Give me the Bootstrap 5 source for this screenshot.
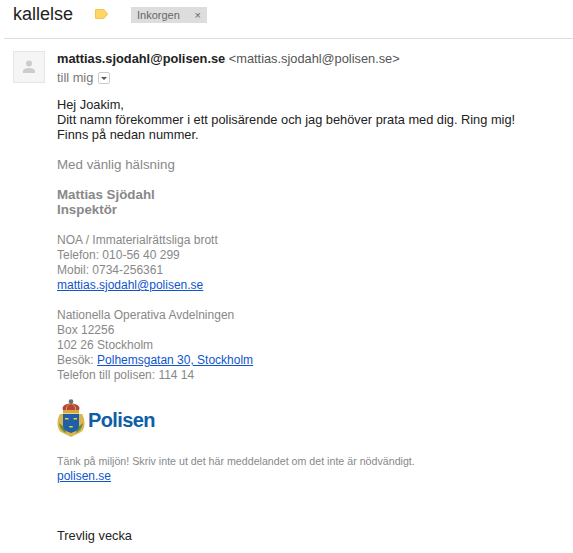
<!DOCTYPE html>
<html lang="sv">
<head>
    <meta charset="UTF-8">
    <title>kallelse</title>
    <link rel="stylesheet" href="https://cdn.jsdelivr.net/npm/bootstrap@5.3.0/dist/css/bootstrap.min.css">
    <style>
        body {
            font-family: "Liberation Sans", Arial, sans-serif;
            font-size: 12px;
            line-height: 15px;
            color: #222;
            background: #fff;
            overflow: hidden;
        }
        .mail-head {
            height: 39px;
            margin-left: 4px;
            padding: 0 0 10px 9px;
            border-bottom: 1px solid #dcdcdc;
        }
        .mail-subject {
            font-size: 18px;
            line-height: 28px;
        }
        .mail-tag {
            margin-left: 21px;
        }
        .mail-inbox {
            margin: 2px 0 0 22px;
            height: 16px;
            padding: 0 6px;
            width: 76px;
            background: #ddd;
            color: #666;
            font-size: 11px;
            line-height: 16px;
        }
        .mail-inbox span { font-size: 11px; color: #666; }
        .mail-body {
            padding: 12px 0 0 13px;
        }
        .mail-avatar {
            width: 32px;
            height: 32px;
            background: #f5f5f5;
            border: 1px solid #e5e5e5;
        }
        .mail-main {
            margin-left: 12px;
            font-size: 12.8px;
        }
        .mail-from { line-height: 14px; height: 15px; margin-top: 1px; }
        .mail-from small { font-size: 12.8px; color: #555; }
        .mail-to {
            color: #777;
            font-size: 12.8px;
            margin-top: 3px;
            line-height: 16px;
        }
        .mail-caret {
            display: inline-block;
            width: 12px;
            height: 12px;
            margin-left: 1px;
            border: 1px solid #ccc;
            border-radius: 2px;
            vertical-align: -2px;
            position: relative;
        }
        .mail-caret::after {
            content: "";
            position: absolute;
            left: 2px;
            top: 4px;
            border: 3px solid transparent;
            border-top: 3px solid #555;
        }
        .mail-text { margin-top: 11px; font-size: 12.8px; }
        .mail-text p { margin: 0; }
        .mail-gap { margin-top: 15px !important; }
        .mail-gray { color: #888; }
        .mail-sign { font-size: 13.33px; }
        .mail-small { font-size: 12px; }
        .mail-tiny { font-size: 10.66px; }
        .mail-text a { color: #15c; }
        .mail-logo { height: 39px; margin-top: 16px; }
        .mail-logo-name {
            font-size: 20px;
            line-height: 36px;
            padding-top: 2px;
            font-weight: 700;
            color: #0d5ea6;
            margin-left: 3px;
            letter-spacing: -.6px;
        }
        .mail-end { margin-top: 44px !important; }
    </style>
</head>
<body>
    <div class="mail-head d-flex align-items-center">
        <div class="mail-subject">kallelse</div>
        <svg class="mail-tag" width="15" height="12" viewBox="0 0 15 12"><path d="M1.5 1.5h8.5l3.5 4.5-3.5 4.5H1.5z" fill="#fdd663" stroke="#f1c15a"/></svg>
        <div class="mail-inbox d-flex justify-content-between"><span>Inkorgen</span><span>×</span></div>
    </div>
    <div class="mail-body d-flex">
        <div class="mail-avatar d-flex align-items-center justify-content-center flex-shrink-0">
            <svg width="14" height="14" viewBox="0 0 14 14"><circle cx="7" cy="3.6" r="3" fill="#ccc"/><path d="M1 13v-1.6C1 9.2 4 8 7 8s6 1.2 6 3.4V13z" fill="#ccc"/></svg>
        </div>
        <div class="mail-main flex-grow-1">
            <div class="mail-from"><b>mattias.sjodahl@polisen.se</b> <small>&lt;mattias.sjodahl@polisen.se&gt;</small></div>
            <div class="mail-to">till mig <span class="mail-caret"></span></div>
            <div class="mail-text">
                <p>Hej Joakim,</p>
                <p>Ditt namn förekommer i ett polisärende och jag behöver prata med dig. Ring mig!</p>
                <p>Finns på nedan nummer.</p>
                <p class="mail-gray mail-sign mail-gap">Med vänlig hälsning</p>
                <p class="mail-gray mail-sign mail-gap"><b>Mattias Sjödahl</b></p>
                <p class="mail-gray mail-sign"><b>Inspektör</b></p>
                <p class="mail-gray mail-small mt-3">NOA / Immaterialrättsliga brott</p>
                <p class="mail-gray mail-small">Telefon: 010-56 40 299</p>
                <p class="mail-gray mail-small">Mobil: 0734-256361</p>
                <p class="mail-small"><a href="#">mattias.sjodahl@polisen.se</a></p>
                <p class="mail-gray mail-small mail-gap">Nationella Operativa Avdelningen</p>
                <p class="mail-gray mail-small">Box 12256</p>
                <p class="mail-gray mail-small">102 26 Stockholm</p>
                <p class="mail-gray mail-small">Besök: <a href="#">Polhemsgatan 30, Stockholm</a></p>
                <p class="mail-gray mail-small">Telefon till polisen: 114 14</p>
                <div class="mail-logo d-flex align-items-center">
                    <svg width="28" height="39" viewBox="0 0 28 39">
                        <path d="M3 15C0 20-1 29 4 33c3 2 7 3 10 5 3-2 7-3 10-5 5-4 4-13 1-18z" fill="#d8b84e"/>
                        <path d="M2 24c1 5 3 8 7 10l-1-5zM26 24c-1 5-3 8-7 10l1-5z" fill="#6f8a3c"/>
                        <path d="M6 15h16v12c0 4-5 6-8 7-3-1-8-3-8-7z" fill="#1f5fa8"/>
                        <path d="M8 19h3.500v1.600H8zM16.500 19H20v1.600h-3.500zM12.300 27h3.400v1.600h-3.400z" fill="#f0cf45"/>
                        <path d="M6 11C4 7 9 4.500 14 4.500S24 7 22 11z" fill="#b5453a"/>
                        <path d="M9.500 11c-.5-3 1-5 4.500-6.500 3.500 1.500 5 3.500 4.500 6.500" fill="none" stroke="#d9a93a"/>
                        <path d="M6 11h16v3.500H6z" fill="#d9a93a"/>
                        <circle cx="14" cy="2.600" r="2.300" fill="#66707a"/>
                    </svg>
                    <span class="mail-logo-name">Polisen</span>
                </div>
                <p class="mail-gray mail-tiny mt-3">Tänk på miljön! Skriv inte ut det här meddelandet om det inte är nödvändigt.</p>
                <p class="mail-small"><a href="#">polisen.se</a></p>
                <p class="mail-end">Trevlig vecka</p>
            </div>
        </div>
    </div>
</body>
</html>
